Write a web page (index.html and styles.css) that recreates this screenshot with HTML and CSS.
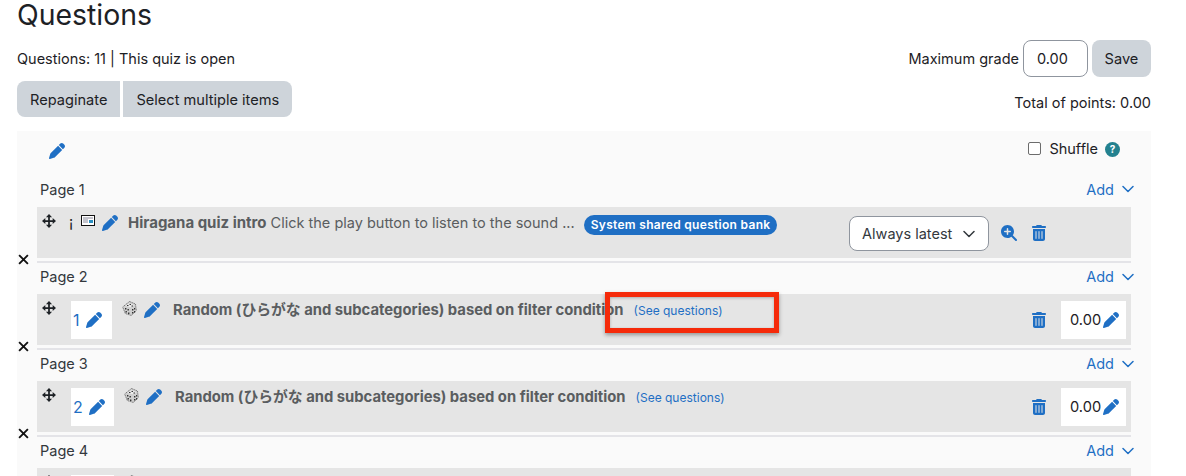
FILE: index.html
```html
<!DOCTYPE html>
<html lang="en">
<head>
    <meta charset="UTF-8">
    <meta name="viewport" content="width=device-width, initial-scale=1.0">
    <title>Questions</title>
    <link rel="stylesheet" href="styles.css">
</head>
<body>

<svg class="defs" width="0" height="0">
    <symbol id="i-pencil" viewBox="0 0 512 512"><path d="M362.7 19.3L314.3 67.7 444.3 197.7l48.4-48.4c25-25 25-65.5 0-90.5L453.3 19.3c-25-25-65.5-25-90.5 0zm-71 71L58.6 323.5c-10.4 10.4-18 23.3-22.2 37.4L1 481.2C-1.5 489.7 .8 498.8 7 505s15.3 8.5 23.7 6.1l120.3-35.4c14.1-4.2 27-11.8 37.4-22.2L421.7 220.3 291.7 90.3z"/></symbol>
    <symbol id="i-move" viewBox="0 0 16 16">
        <path d="M8 2v12M2 8h12" fill="none" stroke="currentColor" stroke-width="2"/>
        <path d="M8 0l3.500 3.800h-7zM8 16l-3.500-3.800h7zM0 8l3.800-3.500v7zM16 8l-3.800 3.500v-7z"/>
    </symbol>
    <symbol id="i-trash" viewBox="0 0 448 512"><path d="M135.2 17.7C140.6 6.8 151.7 0 163.8 0H284.2c12.1 0 23.2 6.8 28.6 17.7L320 32h96c17.7 0 32 14.3 32 32s-14.3 32-32 32H32C14.3 96 0 81.7 0 64S14.3 32 32 32h96l7.2-14.3zM32 128H416V448c0 35.3-28.7 64-64 64H96c-35.3 0-64-28.7-64-64V128zm96 64c-8.8 0-16 7.2-16 16V432c0 8.8 7.2 16 16 16s16-7.2 16-16V208c0-8.8-7.2-16-16-16zm96 0c-8.8 0-16 7.2-16 16V432c0 8.8 7.2 16 16 16s16-7.2 16-16V208c0-8.8-7.2-16-16-16zm96 0c-8.8 0-16 7.2-16 16V432c0 8.8 7.2 16 16 16s16-7.2 16-16V208c0-8.8-7.2-16-16-16z"/></symbol>
    <symbol id="i-zoom" viewBox="0 0 512 512"><path d="M416 208c0 45.9-14.9 88.3-40 122.7L502.6 457.4c12.5 12.5 12.5 32.8 0 45.3s-32.8 12.5-45.3 0L330.7 376c-34.4 25.2-76.8 40-122.7 40C93.1 416 0 322.9 0 208S93.1 0 208 0S416 93.1 416 208zM184 296c0 13.3 10.7 24 24 24s24-10.7 24-24V232h64c13.3 0 24-10.7 24-24s-10.7-24-24-24H232V120c0-13.3-10.7-24-24-24s-24 10.7-24 24v64H120c-13.3 0-24 10.7-24 24s10.7 24 24 24h64v64z"/></symbol>
    <symbol id="i-chevron" viewBox="0 0 12 8"><path d="M1 1.5l5 5 5-5" fill="none" stroke="currentColor" stroke-width="1.5" stroke-linecap="round" stroke-linejoin="round"/></symbol>
    <symbol id="i-close" viewBox="0 0 10 10"><path d="M1 1l8 8M9 1l-8 8" fill="none" stroke="currentColor" stroke-width="1.7"/></symbol>
    <symbol id="i-dice" viewBox="0 0 15 15">
        <path d="M7.5 .5l6 2.5.8 6.5-5 5-6-2-2.6-6.500z" fill="#cfcfcf" stroke="#555" stroke-width=".8" stroke-dasharray="1.400 .8"/>
        <path d="M7.300 2.500l5 1.500-4 2.300-5-1.700z" fill="#eee"/>
        <path d="M5 4h1.500v1H5zM7.500 3h1.500v1H7.500zM9.500 4.500H11v1H9.500zM3 7h1.400v1.400H3zM5.500 8h1.400v1.400H5.500zM3.500 10h1.400v1.400H3.500zM6 11.500h1.400v1.400H6zM10 8h1.400v1.400H10zM12 7h1.200v1.400H12zM10 11h1.400v1.400H10zM12 10h1.200v1.400H12z" fill="#333"/>
    </symbol>
</svg>

<div class="header-block">
    <h2 class="page-title">Questions</h2>
    <div class="info-row">
        <div class="info-left">
            <p class="status">Questions: 11 | This quiz is open</p>
            <div class="button-group">
                <button class="btn">Repaginate</button>
                <button class="btn">Select multiple items</button>
            </div>
        </div>
        <div class="info-right">
            <div class="grade-form">
                <span>Maximum grade</span>
                <span class="grade-input">0.00</span>
                <button class="btn save">Save</button>
            </div>
            <p class="total">Total of points: 0.00</p>
        </div>
    </div>
</div>

<div class="quiz-panel">
    <div class="panel-top">
        <svg class="icon blue panel-edit"><use href="#i-pencil"/></svg>
        <label class="shuffle">
            <span class="checkbox"></span>
            <span>Shuffle</span>
            <span class="help">?</span>
        </label>
    </div>

    <section class="page">
        <svg class="remove"><use href="#i-close"/></svg>
        <div class="page-body first">
            <div class="page-head">
                <span>Page 1</span>
                <a class="add">Add <svg class="chevron"><use href="#i-chevron"/></svg></a>
            </div>
            <div class="slot">
                <svg class="icon move"><use href="#i-move"/></svg>
                <span class="mark">¡</span>
                <svg class="activity" viewBox="0 0 14 11">
                    <rect x="0.5" y="0.5" width="13" height="10" fill="#fff" stroke="#111"/>
                    <path d="M2 3h10M2 5h5M2 7h5" stroke="#889" stroke-width="1"/>
                    <rect x="8" y="5" width="4" height="3" fill="#2a8fc0"/>
                </svg>
                <svg class="icon blue edit"><use href="#i-pencil"/></svg>
                <span class="intro"><b>Hiragana quiz intro</b> Click the play button to listen to the sound ...</span>
                <span class="badge">System shared question bank</span>
                <div class="slot-right intro-right">
                    <span class="version">Always latest <svg class="chevron dark"><use href="#i-chevron"/></svg></span>
                    <svg class="icon blue zoom"><use href="#i-zoom"/></svg>
                    <svg class="icon blue trash"><use href="#i-trash"/></svg>
                </div>
            </div>
        </div>
    </section>

    <section class="page">
        <svg class="remove"><use href="#i-close"/></svg>
        <div class="page-body">
            <div class="page-head">
                <span>Page 2</span>
                <a class="add">Add <svg class="chevron"><use href="#i-chevron"/></svg></a>
            </div>
            <div class="slot">
                <svg class="icon move"><use href="#i-move"/></svg>
                <span class="number">1 <svg class="icon blue"><use href="#i-pencil"/></svg></span>
                <svg class="dice"><use href="#i-dice"/></svg>
                <svg class="icon blue edit"><use href="#i-pencil"/></svg>
                <b class="title">Random (ひらがな and subcategories) based on filter condition</b>
                <a class="see">(See questions)</a>
                <div class="slot-right">
                    <svg class="icon blue trash"><use href="#i-trash"/></svg>
                    <span class="grade">0.00<svg class="icon blue"><use href="#i-pencil"/></svg></span>
                </div>
            </div>
        </div>
    </section>

    <section class="page">
        <svg class="remove"><use href="#i-close"/></svg>
        <div class="page-body">
            <div class="page-head">
                <span>Page 3</span>
                <a class="add">Add <svg class="chevron"><use href="#i-chevron"/></svg></a>
            </div>
            <div class="slot">
                <svg class="icon move"><use href="#i-move"/></svg>
                <span class="number wide">2 <svg class="icon blue"><use href="#i-pencil"/></svg></span>
                <svg class="dice"><use href="#i-dice"/></svg>
                <svg class="icon blue edit"><use href="#i-pencil"/></svg>
                <b class="title">Random (ひらがな and subcategories) based on filter condition</b>
                <a class="see">(See questions)</a>
                <div class="slot-right">
                    <svg class="icon blue trash"><use href="#i-trash"/></svg>
                    <span class="grade">0.00<svg class="icon blue"><use href="#i-pencil"/></svg></span>
                </div>
            </div>
        </div>
    </section>

    <section class="page">
        <div class="page-body">
            <div class="page-head">
                <span>Page 4</span>
                <a class="add">Add <svg class="chevron"><use href="#i-chevron"/></svg></a>
            </div>
            <div class="slot">
                <svg class="icon move"><use href="#i-move"/></svg>
                <span class="number wide"></span>
                <svg class="dice"><use href="#i-dice"/></svg>
            </div>
        </div>
    </section>
</div>

<div class="callout"></div>

</body>
</html>
```

FILE: styles.css
```css
* {
    box-sizing: border-box;
}
html, body {
    height: 476px;
    overflow: hidden;
}
body {
    margin: 0;
    position: relative;
    font-family: "Inter", "Noto Sans CJK JP", sans-serif;
    font-size: 14.5px;
    color: #1d2125;
    background: #fff;
}
b {
    font-size: 15px;
}
.defs {
    position: absolute;
}
.header-block {
    padding: 0 35px 0 17px;
}
.page-title {
    margin: 0;
    height: 40px;
    font-size: 28.4px;
    font-weight: 400;
    line-height: 30px;
}
.info-row {
    display: flex;
    justify-content: space-between;
}
.status {
    margin: 9px 0 13px;
    line-height: 19px;
}
.button-group {
    display: flex;
    gap: 3px;
}
.btn {
    height: 36px;
    padding: 2px 13px 0;
    border: 0;
    border-radius: 0;
    background: #ced4da;
    color: #1d2125;
    font: inherit;
    font-size: 14.6px;
}
.button-group .btn:first-child {
    border-radius: 8px 0 0 8px;
}
.button-group .btn:last-child {
    border-radius: 0 8px 8px 0;
}
.info-right {
    display: flex;
    flex-direction: column;
    align-items: flex-end;
}
.grade-form {
    display: flex;
    align-items: center;
    gap: 4px;
}
.grade-input {
    width: 65px;
    height: 37px;
    padding-left: 13px;
    line-height: 35px;
    border: 1px solid #8f959e;
    border-radius: 8px;
}
.btn.save {
    width: 59px;
    height: 37px;
    padding: 0;
    border-radius: 8px;
}
.total {
    margin: 16px 0 0;
    line-height: 19px;
}
.quiz-panel {
    width: 1134px;
    height: 345px;
    margin: 14px 0 0 17px;
    background: #fafafa;
    overflow: hidden;
}
.panel-top {
    display: flex;
    justify-content: space-between;
    align-items: center;
    height: 40px;
    padding: 0 31px 0 32px;
}
.icon {
    width: 16px;
    height: 16px;
    flex: none;
    fill: #33383d;
}
.icon.blue {
    fill: #1f6fc4;
}
.move {
    width: 14px;
    height: 14px;
    color: #1d2125;
    fill: #1d2125;
}
.trash {
    width: 14px;
}
.shuffle {
    display: flex;
    align-items: center;
    margin-bottom: 5px;
}
.checkbox {
    width: 13px;
    height: 13px;
    margin-right: 8px;
    background: #fff;
    border: 1px solid #6c6c6c;
    border-radius: 2px;
}
.help {
    width: 15px;
    height: 15px;
    margin: 1px 0 0 7px;
    border-radius: 50%;
    background: #23818f;
    color: #fff;
    font-size: 10px;
    font-weight: 700;
    line-height: 15px;
    text-align: center;
}
.page {
    display: grid;
    grid-template-columns: 20px 1fr;
}
.remove {
    grid-column: 1;
    align-self: end;
    width: 11px;
    height: 11px;
    margin: 0 0 -2px 1px;
    color: #111;
}
.page-body {
    grid-column: 2;
    margin-right: 20px;
    padding-bottom: 3px;
    border-bottom: 2px solid #e4e4e8;
}
.page-head {
    display: flex;
    justify-content: space-between;
    align-items: center;
    height: 31px;
    padding: 0 3px 4px;
    color: #33383d;
}
.first .page-head {
    height: 36px;
    padding-bottom: 0;
}
.add {
    display: flex;
    align-items: center;
    gap: 8px;
    margin-right: -6px;
    color: #1f6fc4;
}
.chevron {
    width: 12px;
    height: 8px;
    color: #1f6fc4;
}
.chevron.dark {
    color: #33383d;
    margin-left: 11px;
}
.slot {
    display: flex;
    align-items: flex-start;
    height: 51px;
    padding: 7px 5px 0 5px;
    background: #e5e5e5;
    color: #5a5d60;
}
.move {
    margin-right: 15px;
}
.mark {
    margin: -1px 0 0 -2px;
    width: 12px;
    color: #222;
    line-height: 18px;
}
.activity {
    width: 14px;
    height: 11px;
    margin: 1px 7px 0 0;
    flex: none;
}
.edit {
    margin: 1px 10px 0 0;
}
.intro {
    white-space: nowrap;
    line-height: 18px;
}
.badge {
    height: 20px;
    margin: 1px 0 0 9px;
    padding: 0 7px;
    border-radius: 10px;
    background: #1f6fc4;
    color: #fff;
    font-size: 12px;
    font-weight: 600;
    letter-spacing: .3px;
    line-height: 19px;
    white-space: nowrap;
}
.number, .grade {
    display: flex;
    align-items: center;
    height: 38px;
    background: #fff;
    color: #1f6fc4;
}
.number {
    width: 41px;
    margin-right: 10px;
    padding-left: 2px;
    font-size: 16px;
}
.number .icon {
    margin-left: 6px;
}
.number.wide {
    width: 43px;
}
.grade {
    width: 65px;
    margin-left: 15px;
    padding-left: 9px;
    color: #1d2125;
    font-size: 14.6px;
}
.grade .icon {
    margin-left: 2px;
}
.dice {
    width: 15px;
    height: 15px;
    margin-right: 7px;
    flex: none;
}
.title {
    margin-left: 3px;
    font-size: 14.8px;
    line-height: 18px;
    white-space: nowrap;
}
.see {
    margin: 2px 0 0 10px;
    color: #1f6fc4;
    font-size: 12px;
    white-space: nowrap;
}
.slot-right {
    display: flex;
    align-items: center;
    margin-left: auto;
}
.intro-right {
    margin-right: 80px;
}
.version {
    display: flex;
    align-items: center;
    width: 140px;
    height: 35px;
    margin: 2px 12px 0 0;
    padding-left: 12px;
    background: #fff;
    border: 1px solid #8f959e;
    border-radius: 8px;
    color: #33383d;
}
.zoom {
    margin-right: 15px;
}
.callout {
    position: absolute;
    left: 605px;
    top: 292px;
    width: 174px;
    height: 41px;
    border: 5px solid #f52a0a;
    box-shadow: 0 2px 4px rgba(0, 0, 0, .35), inset 0 1px 3px rgba(0, 0, 0, .25);
}
```
